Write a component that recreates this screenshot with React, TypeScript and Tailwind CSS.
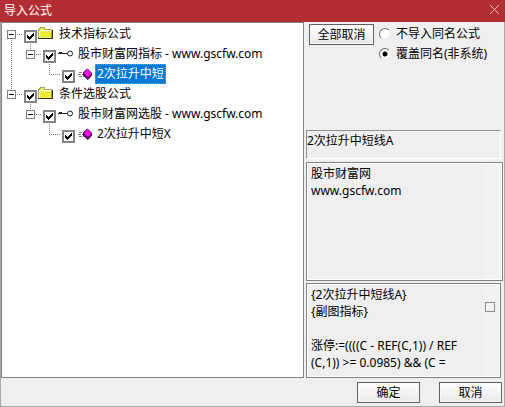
import { useState } from "react";

type Kind = "folder" | "key" | "formula";
type Guide = "trunk" | "blank" | "expander" | "elbow";

interface TreeItem {
  id: string;
  label: string;
  kind: Kind;
  guides: Guide[];
  stubUp?: boolean;
  stubDown?: boolean;
}

const items: TreeItem[] = [
  { id: "tech", label: "技术指标公式", kind: "folder", guides: ["expander"], stubDown: true },
  { id: "tech-site", label: "股市财富网指标 - www.gscfw.com", kind: "key", guides: ["trunk", "expander"], stubUp: true },
  { id: "tech-item", label: "2次拉升中短", kind: "formula", guides: ["trunk", "blank", "elbow"] },
  { id: "pick", label: "条件选股公式", kind: "folder", guides: ["expander"], stubUp: true },
  { id: "pick-site", label: "股市财富网选股 - www.gscfw.com", kind: "key", guides: ["blank", "expander"], stubUp: true },
  { id: "pick-item", label: "2次拉升中短X", kind: "formula", guides: ["blank", "blank", "elbow"] },
];

const memo = "股市财富网\nwww.gscfw.com";

const source = `{2次拉升中短线A}
{副图指标}

涨停:=((((C - REF(C,1)) / REF
(C,1)) >= 0.0985) && (C =`;

// One 19px wide column of the tree's connecting lines
function GuideCell({ guide, stubUp, stubDown }: { guide: Guide; stubUp?: boolean; stubDown?: boolean }) {
  return (
    <svg width="19" height="20" className="shrink-0" fill="none" shapeRendering="crispEdges" aria-hidden="true">
      <g stroke="#808080" strokeDasharray="1 1">
        {guide === "trunk" && <path d="M6.5 0V20" />}
        {guide === "elbow" && <path d="M6.5 0V10M6 10.5H18" />}
        {guide === "expander" && <path d="M12 10.5H18" />}
        {guide === "expander" && stubUp && <path d="M6.5 0V6" />}
        {guide === "expander" && stubDown && <path d="M6.5 16V20" />}
      </g>
      {guide === "expander" && (
        <>
          <rect x="2.5" y="6.5" width="8" height="8" fill="#fff" stroke="#808080" />
          <path d="M4 10.5H9" stroke="#000" />
        </>
      )}
    </svg>
  );
}

function ItemIcon({ kind }: { kind: Kind }) {
  if (kind === "folder") {
    return (
      <svg width="16" height="16" shapeRendering="crispEdges" aria-hidden="true">
        <path d="M0 3H1V2H2V1H6V2H7V3H14V12H0Z" fill="#f0f060" />
        <path d="M0.5 12V3.5H1.5V2.5H2.5V1.5H6.5V3.5H13.5V12" fill="none" stroke="#a8a850" />
        <path d="M2 4.5H13M1.5 5V12" stroke="#ffffd8" />
        <path d="M3 6.5H13M3 8.5H13M3 10.5H13" stroke="#e6e600" strokeDasharray="1 1" />
        <path d="M4 7.5H13M4 9.5H13" stroke="#e6e600" strokeDasharray="1 1" />
        <path d="M0 12.5H15M14.5 4V13" fill="none" stroke="#303010" />
      </svg>
    );
  }
  if (kind === "key") {
    return (
      <svg width="16" height="16" fill="none" stroke="#222" aria-hidden="true">
        <circle cx="13" cy="7.5" r="2.5" />
        <path d="M1 7.5H10.5" />
        <path d="M2 7H5" strokeWidth="2" />
      </svg>
    );
  }
  return (
    <svg width="16" height="16" aria-hidden="true">
      <path d="M3 6.5H7M2 8.5H7M3 10.5H8" stroke="#777" strokeDasharray="3 1" />
      <path d="M11.5 3L15.5 7V9.5L12 13.5L7.5 9.5V6.5Z" fill="#7a007a" stroke="#300030" />
      <path d="M11.5 3L15.5 7.5L12 11L8 7Z" fill="#ff10f0" />
    </svg>
  );
}

function CheckBox({ id, checked, onChange }: { id: string; checked: boolean; onChange: () => void }) {
  return (
    <span className="mt-1 grid size-[13px] shrink-0">
      <input
        id={id}
        type="checkbox"
        checked={checked}
        onChange={onChange}
        className="col-start-1 row-start-1 size-[13px] appearance-none border-2 border-[#848484] bg-white"
      />
      {checked && (
        <svg
          width="13"
          height="13"
          className="pointer-events-none col-start-1 row-start-1"
          shapeRendering="crispEdges"
          aria-hidden="true"
        >
          <path d="M3 5H4V6H5V7H6V6H7V5H8V4H9V3H10V6H9V7H8V8H7V9H6V10H5V9H4V8H3Z" />
        </svg>
      )}
    </span>
  );
}

const radioClass =
  "size-3 shrink-0 appearance-none rounded-full border border-b-[#e8e8e8] border-l-[#707070] border-r-[#e8e8e8] border-t-[#707070] bg-white checked:bg-[radial-gradient(circle,#000_2px,#fff_3px)]";

const buttonClass =
  "h-[21px] border border-[#606060] bg-linear-to-b from-white to-[#e8e8e8] text-center text-[12px] leading-4 shadow-[inset_0_0_0_1px_#fafafa]";

export default function App() {
  const [selected, setSelected] = useState("tech-item");
  const [checked, setChecked] = useState<string[]>(items.map((i) => i.id));
  const [mode, setMode] = useState("overwrite");

  const toggle = (id: string) => {
    setChecked((prev) => (prev.includes(id) ? prev.filter((c) => c !== id) : [...prev, id]));
  };

  return (
    <div className="flex min-h-screen flex-col bg-[#efefef] font-['Noto_Sans','Noto_Sans_CJK_SC',sans-serif] text-[12px] leading-4 text-black">
      {/* Title bar */}
      <header className="flex h-[22px] items-center justify-between bg-[#b32e33] pl-1 pr-[5px] text-white">
        <h1>导入公式</h1>
        <button type="button" aria-label="关闭" className="pb-1">
          <svg width="11" height="11" stroke="#e9b9bb" aria-hidden="true">
            <path d="M1 1L10 10M10 1L1 10" />
          </svg>
        </button>
      </header>

      <div className="flex flex-1 flex-col border-x border-b border-[#a8a8a8]">
        <main className="flex flex-1">
          {/* Formula tree */}
          <ul className="min-w-0 flex-1 border border-[#828282] bg-white pl-[3px] pt-px">
            {items.map((item) => (
              <li key={item.id} className="flex h-5 items-center">
                {item.guides.map((g, i) => (
                  <GuideCell key={i} guide={g} stubUp={item.stubUp} stubDown={item.stubDown} />
                ))}
                <CheckBox id={item.id} checked={checked.includes(item.id)} onChange={() => toggle(item.id)} />
                <span className="ml-px w-[19px] shrink-0">
                  <ItemIcon kind={item.kind} />
                </span>
                <label
                  htmlFor={item.id}
                  onClick={() => setSelected(item.id)}
                  className={
                    selected === item.id
                      ? "h-5 whitespace-nowrap border border-dotted border-[#e08a30] bg-[#0078d7] px-px leading-[18px] text-white"
                      : "h-5 whitespace-nowrap border border-transparent px-px leading-[18px]"
                  }
                >
                  {item.label}
                </label>
              </li>
            ))}
          </ul>

          {/* Options and preview */}
          <section className="flex w-[200px] shrink-0 flex-col pl-0.5">
            <div className="flex flex-1 items-start gap-[5px] pl-[3px] pt-0.5">
              <button type="button" onClick={() => setChecked([])} className={`${buttonClass} w-[65px]`}>
                全部取消
              </button>
              <div className="flex flex-col">
                <label className="flex h-5 items-center gap-[5px]">
                  <input
                    type="radio"
                    name="mode"
                    checked={mode === "skip"}
                    onChange={() => setMode("skip")}
                    className={radioClass}
                  />
                  不导入同名公式
                </label>
                <label className="flex h-5 items-center gap-[5px]">
                  <input
                    type="radio"
                    name="mode"
                    checked={mode === "overwrite"}
                    onChange={() => setMode("overwrite")}
                    className={radioClass}
                  />
                  覆盖同名(非系统)
                </label>
              </div>
            </div>

            <input
              readOnly
              aria-label="公式名称"
              value="2次拉升中短线A"
              className="mr-[3px] h-[29px] border border-b-white border-l-[#909090] border-r-white border-t-[#909090] bg-transparent pb-2.5 outline-none"
            />

            <div className="mr-px mt-[3px] flex h-[119px] border border-[#828282] p-px shadow-[inset_0_0_0_1px_#fff]">
              <textarea
                readOnly
                aria-label="公式描述"
                value={memo}
                className="min-w-0 flex-1 resize-none overflow-hidden bg-transparent pl-[3px] pt-px leading-[17px] outline-none"
              />
              <div className="w-4 bg-[#f3f2f0]" />
            </div>

            <div className="mr-[3px] mt-0.5 flex h-[95px] border border-[#828282] p-px shadow-[inset_0_0_0_1px_#fff]">
              <textarea
                readOnly
                aria-label="公式源码"
                value={source}
                className="min-w-0 flex-1 resize-none overflow-hidden whitespace-pre bg-transparent pl-[3px] pt-px leading-[17px] outline-none"
              />
              <div className="w-4 bg-[#f3f2f0] pl-0.5 pt-[17px]">
                <div className="size-2.5 border border-[#909090]" />
              </div>
            </div>
          </section>
        </main>

        <footer className="flex justify-end gap-[19px] pb-[3px] pr-0.5 pt-1">
          <button type="button" className={`${buttonClass} w-[63px]`}>
            确定
          </button>
          <button type="button" className={`${buttonClass} w-[63px]`}>
            取消
          </button>
        </footer>
      </div>
    </div>
  );
}
